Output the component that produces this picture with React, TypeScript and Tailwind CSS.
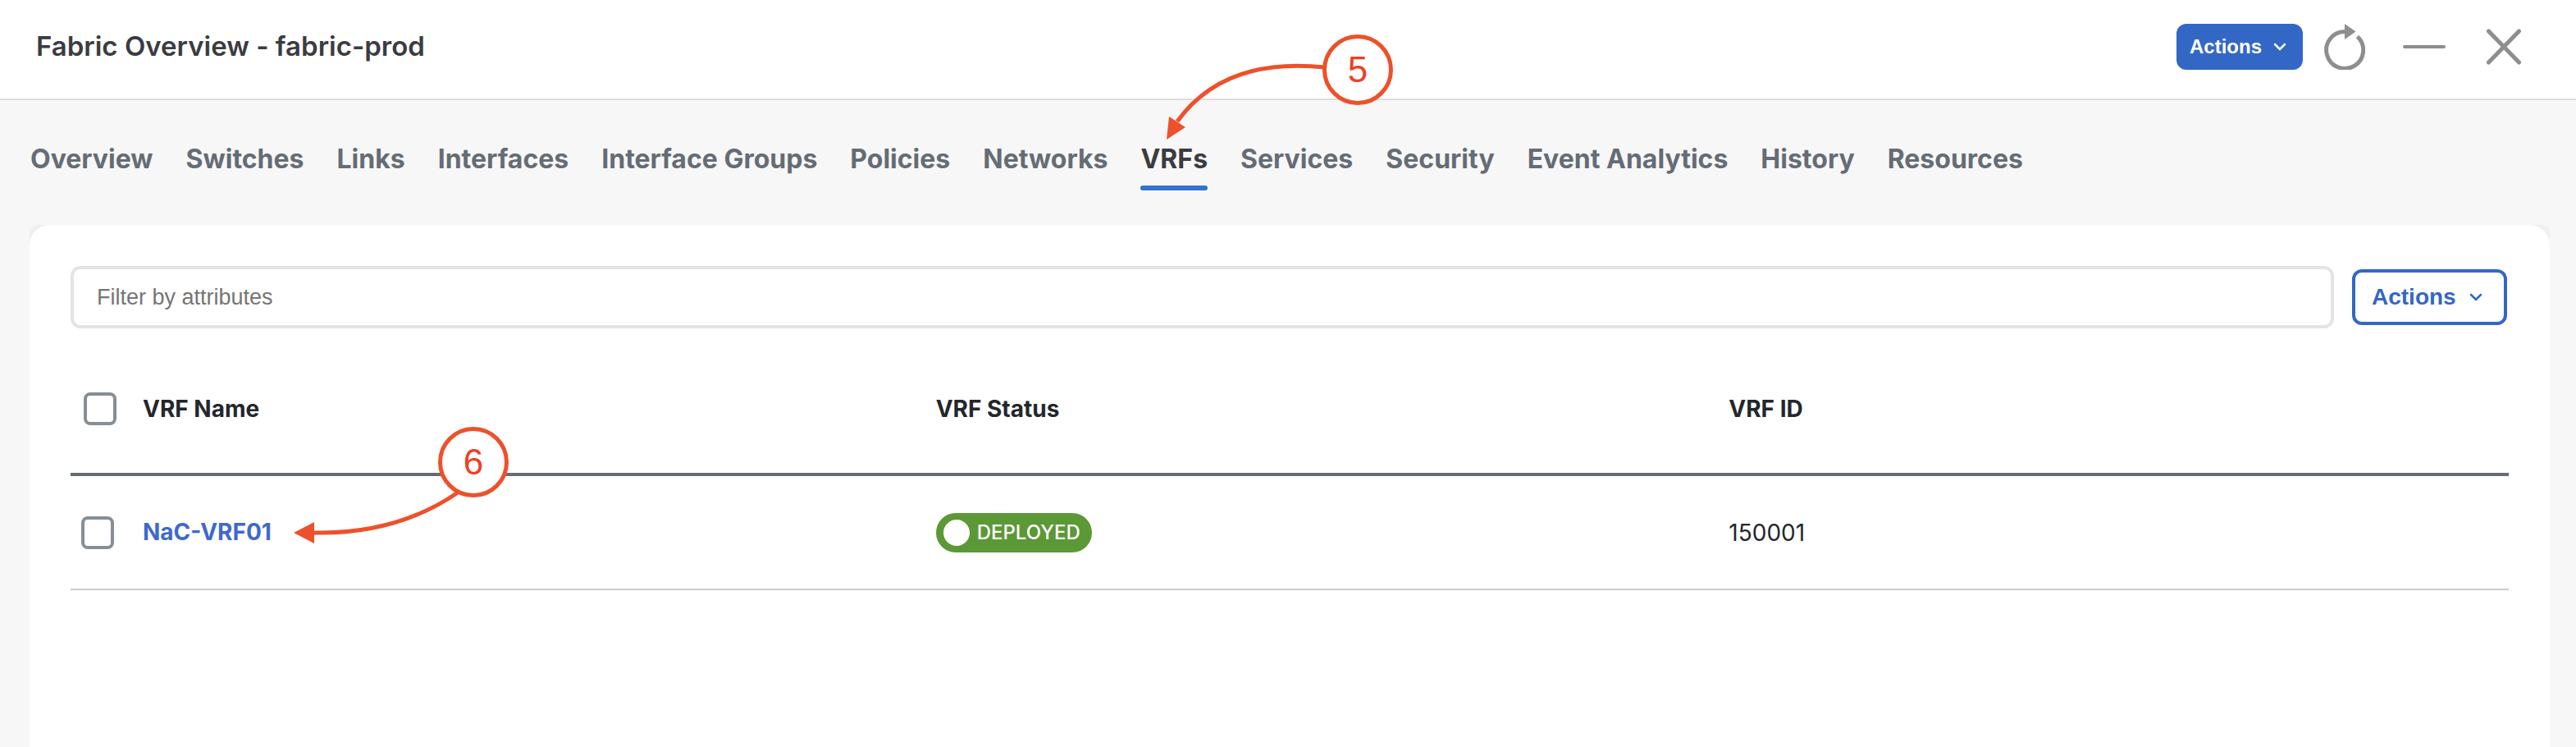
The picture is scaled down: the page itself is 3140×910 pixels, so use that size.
import { useState } from 'react';

interface Vrf {
    name: string;
    status: string;
    id: number;
}

const TABS = [
    'Overview',
    'Switches',
    'Links',
    'Interfaces',
    'Interface Groups',
    'Policies',
    'Networks',
    'VRFs',
    'Services',
    'Security',
    'Event Analytics',
    'History',
    'Resources'
];

const VRFS: Vrf[] = [{ name: 'NaC-VRF01', status: 'DEPLOYED', id: 150001 }];

const Chevron = ({ className }: { className: string }) => (
    <svg viewBox="0 0 16 10" fill="none" className={className} aria-hidden="true">
        <path d="M2 2 L8 8 L14 2" stroke="currentColor" strokeWidth={2.5} strokeLinecap="round" />
    </svg>
);

const checkboxClass =
    'block size-10 appearance-none rounded-lg border-4 border-[#868e96] bg-white checked:bg-[#3367c5]';

// Numbered callout pointing at the active tab
const TabCallout = () => (
    <svg
        viewBox="0 0 320 140"
        className="pointer-events-none absolute bottom-[52px] left-0 h-[140px] w-[320px] max-w-none"
        aria-hidden="true"
    >
        <path d="M225 42 Q102 29 45 108" fill="none" stroke="#ed512b" strokeWidth={5} />
        <path d="M32 130 L35 102 L55 115 Z" fill="#ed512b" />
        <circle cx={265} cy={45} r={40.5} fill="#fff" stroke="#ed512b" strokeWidth={5} />
        <text x={265} y={60} textAnchor="middle" fontSize={44} fill="#ed4026">5</text>
    </svg>
);

// Numbered callout pointing at the VRF link
const LinkCallout = () => (
    <svg
        viewBox="0 0 300 160"
        className="pointer-events-none absolute bottom-0 left-full h-[160px] w-[300px] max-w-none"
        aria-hidden="true"
    >
        <path d="M227 93 Q153 144 52 142" fill="none" stroke="#ed512b" strokeWidth={5} />
        <path d="M27 142 L52 129 L52 155 Z" fill="#ed512b" />
        <circle cx={246} cy={56} r={40.5} fill="#fff" stroke="#ed512b" strokeWidth={5} />
        <text x={246} y={71} textAnchor="middle" fontSize={44} fill="#ed4026">6</text>
    </svg>
);

function Header() {
    return (
        <header className="flex h-[122px] items-center justify-between border-b-2 border-[#dedede] bg-white pb-[6px] pr-[67px] pl-11">
            <h1 className="font-[Inter,sans-serif] text-[33px] font-semibold text-[#3a3c41]">
                Fabric Overview - fabric-prod
            </h1>
            <div className="flex items-center text-[#8e8e8e]">
                <button
                    type="button"
                    className="flex h-14 w-[154px] items-center justify-between rounded-xl bg-[#3367c5] pr-5 pl-4 text-2xl font-bold text-white"
                >
                    Actions
                    <Chevron className="h-[10px] w-4" />
                </button>
                <button type="button" aria-label="Refresh" className="ml-[26px]">
                    <svg viewBox="0 0 50 56" fill="none" className="h-14 w-[50px]">
                        <path
                            d="M25 9.5 A22.5 22.5 0 1 0 40.5 15.5"
                            stroke="currentColor"
                            strokeWidth={5}
                        />
                        <path d="M25 0 L38.5 9.5 L25 19 Z" fill="currentColor" />
                    </svg>
                </button>
                <button type="button" aria-label="Minimize" className="ml-11">
                    <svg viewBox="0 0 56 56" fill="none" className="size-14">
                        <path d="M4 28 H52" stroke="currentColor" strokeWidth={4} strokeLinecap="round" />
                    </svg>
                </button>
                <button type="button" aria-label="Close" className="ml-12">
                    <svg viewBox="0 0 42 56" fill="none" className="h-14 w-[42px]">
                        <path
                            d="M2.5 9 L39.5 47 M39.5 9 L2.5 47"
                            stroke="currentColor"
                            strokeWidth={5}
                            strokeLinecap="round"
                        />
                    </svg>
                </button>
            </div>
        </header>
    );
}

function VrfTable() {
    return (
        <table className="w-full table-fixed border-collapse text-left font-[Inter,sans-serif] text-[28px] leading-9 text-[#23272c]">
            <thead>
                <tr className="h-[158px] border-b-4 border-[#656c75]">
                    <th className="w-[72px] pl-4">
                        <input type="checkbox" aria-label="Select all VRFs" className={checkboxClass} />
                    </th>
                    <th className="pl-4 font-bold">VRF Name</th>
                    <th className="pl-4 font-bold">VRF Status</th>
                    <th className="pl-4 font-bold">VRF ID</th>
                </tr>
            </thead>
            <tbody>
                {VRFS.map((vrf) => (
                    <tr key={vrf.id} className="h-[140px] border-b-2 border-[#cccccc]">
                        <td className="pl-[13px]">
                            <input
                                type="checkbox"
                                aria-label={`Select ${vrf.name}`}
                                className={checkboxClass}
                            />
                        </td>
                        <td className="pl-4">
                            <span className="relative inline-block">
                                <a href="#vrf" className="font-bold text-[#3f69cc]">{vrf.name}</a>
                                <span className="font-['Liberation_Sans',Arial,sans-serif]">
                                    <LinkCallout />
                                </span>
                            </span>
                        </td>
                        <td className="pl-4">
                            <span className="flex h-12 w-fit items-center gap-[9px] rounded-full bg-[#5b9836] pr-[14px] pl-[9px] text-2xl font-medium text-white">
                                <span className="size-8 rounded-full bg-white" />
                                {vrf.status}
                            </span>
                        </td>
                        <td className="pl-4">{vrf.id}</td>
                    </tr>
                ))}
            </tbody>
        </table>
    );
}

export default function App() {
    const [activeTab, setActiveTab] = useState('VRFs');

    return (
        <div className="flex min-h-screen flex-col overflow-hidden bg-[#f7f7f7] font-['Liberation_Sans',Arial,sans-serif]">
            <Header />

            <nav className="flex h-[152px] items-start gap-10 pt-[50px] pl-[37px] font-[Inter,sans-serif]">
                {TABS.map((tab) => (
                    <div key={tab} className="relative">
                        <button
                            type="button"
                            onClick={() => setActiveTab(tab)}
                            className={`flex flex-col text-[32px] leading-[44px] font-bold whitespace-nowrap ${
                                tab === activeTab ? 'text-[#3a3c41]' : 'text-[#656c75]'
                            }`}
                        >
                            {tab}
                            {tab === activeTab && (
                                <span className="mt-[10px] h-[6px] w-full rounded-full bg-[#3273cf]" />
                            )}
                        </button>
                        {tab === 'VRFs' && (
                            <div className="font-['Liberation_Sans',Arial,sans-serif]">
                                <TabCallout />
                            </div>
                        )}
                    </div>
                ))}
            </nav>

            <main className="mr-8 ml-9 flex grow flex-col overflow-hidden">
                <section className="grow rounded-t-3xl bg-white px-[50px] pt-[50px] shadow-[0_0_16px_rgba(0,0,0,0.1)]">
                    <div className="mb-5 flex items-center gap-[22px] pr-[2px]">
                        <input
                            type="text"
                            aria-label="Filter by attributes"
                            placeholder="Filter by attributes"
                            className="h-[76px] min-w-0 grow rounded-xl border-4 border-[#e2e4e8] bg-white px-7 text-[27px] placeholder:text-[#757575]"
                        />
                        <button
                            type="button"
                            className="flex h-[68px] w-[189px] items-center justify-between rounded-xl border-4 border-[#3367c5] bg-white pr-[26px] pl-5 text-[28px] font-bold text-[#3367c5]"
                        >
                            Actions
                            <Chevron className="h-[10px] w-4" />
                        </button>
                    </div>
                    <VrfTable />
                </section>
            </main>
        </div>
    );
}
